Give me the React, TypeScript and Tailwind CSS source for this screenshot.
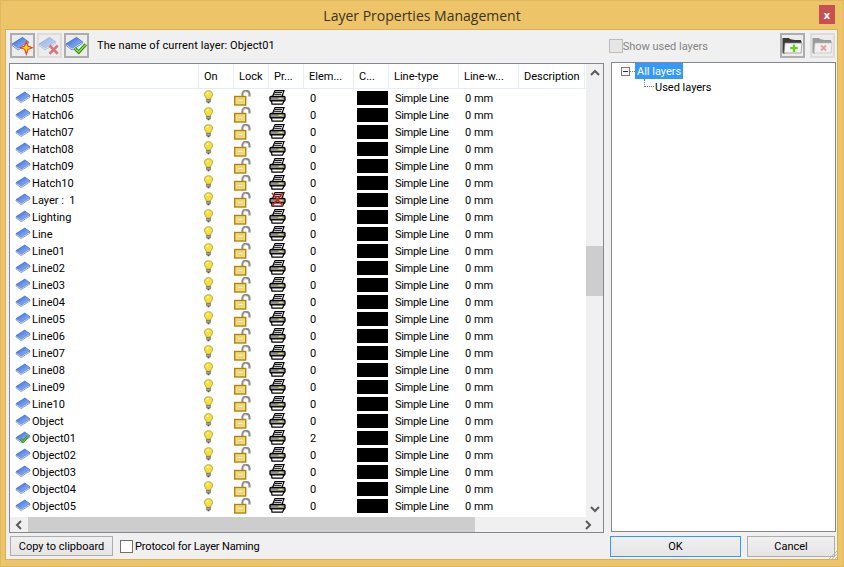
import React from 'react'

const names = [
  'Hatch05', 'Hatch06', 'Hatch07', 'Hatch08', 'Hatch09', 'Hatch10', 'Layer： 1', 'Lighting', 'Line',
  'Line01', 'Line02', 'Line03', 'Line04', 'Line05', 'Line06', 'Line07', 'Line08', 'Line09', 'Line10',
  'Object', 'Object01', 'Object02', 'Object03', 'Object04', 'Object05',
]

const columns = [
  { label: 'Name', width: 'w-[186px]' },
  { label: 'On', width: 'w-[35px]' },
  { label: 'Lock', width: 'w-[35px]' },
  { label: 'Pr...', width: 'w-[35px]' },
  { label: 'Elem...', width: 'w-[50px]' },
  { label: 'C...', width: 'w-[35px]' },
  { label: 'Line-type', width: 'w-[70px]' },
  { label: 'Line-w...', width: 'w-[60px]' },
  { label: 'Description', width: 'w-[66px]' },
]

function LayerShape({ id, faded }: { id: string; faded?: boolean }) {
  return (
    <g opacity={faded ? 0.45 : 1}>
      <defs>
        <linearGradient id={id} x1="0" y1="0" x2="1" y2="1">
          <stop offset="0" stopColor="#2a62d8" />
          <stop offset="1" stopColor="#a8c8fa" />
        </linearGradient>
      </defs>
      <path d="M1 7.5 L10.5 1.5 L16 5.5 L16 6.5 L6.5 12.5 L1 8.5 Z" fill="#e8eefa" stroke="#4a74c4" strokeWidth="0.7" />
      <path d="M1 7 L10.5 1 L16 5 L6.5 11 Z" fill={`url(#${id})`} stroke="#3a66c0" strokeWidth="0.5" />
    </g>
  )
}

function LayerIcon({ id, current }: { id: string; current?: boolean }) {
  return (
    <svg width="16" height="13" viewBox="0 0 17 14" className="mr-[1px] shrink-0">
      <LayerShape id={id} />
      {current && <path d="M5.5 8 L8.5 11.5 L14 5.5" fill="none" stroke="#2f8a14" strokeWidth="2.6" />}
      {current && <path d="M5.5 8 L8.5 11.5 L14 5.5" fill="none" stroke="#8fe04a" strokeWidth="1" />}
    </svg>
  )
}

function Bulb() {
  return (
    <svg width="9" height="14" viewBox="0 0 10 15" className="mt-[-1px]">
      <path d="M5 .5 C2.2 .5 .5 2.4 .5 4.6 C.5 6.8 2.6 8 3 10 L7 10 C7.4 8 9.5 6.8 9.5 4.6 C9.5 2.4 7.8 .5 5 .5 Z" fill="#f4e23c" stroke="#a89828" strokeWidth=".9" />
      <path d="M3.2 2.4 L5 1.8 L5 4 L3 4.6 Z" fill="#fdfbc4" />
      <rect x="3" y="10" width="4" height="3" fill="#a0a098" stroke="#66665f" strokeWidth=".7" />
      <rect x="4" y="13" width="2" height="1.5" fill="#55554f" />
    </svg>
  )
}

function Lock() {
  return (
    <svg width="17" height="16" viewBox="0 0 17 16">
      <path d="M8.5 7 L8.5 4 C8.5 1.6 10.2 .8 12 .8 C14 .8 15.5 2 15.5 4 L15.5 6.5" fill="none" stroke="#8e8e8e" strokeWidth="2.2" />
      <path d="M9.5 6 L9.5 4 C9.5 2.4 10.6 1.6 12 1.6" fill="none" stroke="#d0d0d0" strokeWidth=".8" />
      <rect x=".7" y="6.5" width="11" height="8.5" fill="#f2dc80" stroke="#b08410" strokeWidth="1.4" />
      <rect x="3" y="8.5" width="6.5" height="4.5" fill="#ecd672" />
      <rect x="4" y="10" width="4.5" height="1" fill="#fbf3c4" />
    </svg>
  )
}

function Printer({ off }: { off?: boolean }) {
  return (
    <svg width="17" height="15" viewBox="0 0 17 15">
      <path d="M6 .6 H15 L13 6.5 H3.6 Z" fill="#fff" stroke="#000" strokeWidth="1.2" />
      <path d="M6 2.4 H13 M5.2 4.3 H12.4" stroke="#000" strokeWidth="1" />
      <rect x="1" y="6.5" width="15" height="4.5" rx="1" fill="#8e8e8e" stroke="#000" strokeWidth="1.3" />
      <rect x="9.5" y="7.8" width="4" height="1.2" fill="#ece04a" />
      <path d="M2.5 11 H15 L13.5 14.2 H3 Z" fill="#fff" stroke="#000" strokeWidth="1.2" />
      {off && <path d="M3 1 L14 14 M14 1 L3 14" stroke="#e01818" strokeWidth="1.6" />}
    </svg>
  )
}

function ToolButton({ children, disabled }: { children: React.ReactNode; disabled?: boolean }) {
  return (
    <button className={`flex h-[25px] w-[25px] items-center justify-center border-2 bg-[#ececec] ${disabled ? 'border-[#dcdcdc]' : 'border-[#adadad]'}`}>
      {children}
    </button>
  )
}

function FolderIcon({ disabled }: { disabled?: boolean }) {
  return (
    <svg width="21" height="19" viewBox="0 0 21 19" opacity={disabled ? 0.45 : 1}>
      <path d="M1 2 H7 L9 4 H19 V7 H1 Z" fill="#3a3a3a" />
      <path d="M1 2 V17 H3 V7 H19 V5" fill="#3a3a3a" stroke="#3a3a3a" />
      <path d="M3 7 H20 L19 17 H2 Z" fill="#f6f6f6" stroke="#8a8a8a" strokeWidth=".7" />
      {disabled ? (
        <path d="M9 9.5 L14 14.5 M14 9.5 L9 14.5" stroke="#d8484a" strokeWidth="2" />
      ) : (
        <path d="M12 8.5 V16 M8.2 12.2 H15.8" stroke="#63d615" strokeWidth="2.2" />
      )}
    </svg>
  )
}

function Chevron({ dir }: { dir: 'up' | 'down' | 'left' | 'right' }) {
  const paths = {
    up: 'M1 6 L5 2 L9 6',
    down: 'M1 2 L5 6 L9 2',
    left: 'M6 1 L2 5 L6 9',
    right: 'M2 1 L6 5 L2 9',
  }
  const horizontal = dir === 'up' || dir === 'down'
  return (
    <svg width={horizontal ? 10 : 8} height={horizontal ? 8 : 10} viewBox={horizontal ? '0 0 10 8' : '0 0 8 10'}>
      <path d={paths[dir]} fill="none" stroke="#5a5a5a" strokeWidth="2" />
    </svg>
  )
}

function Row({ name, index }: { name: string; index: number }) {
  return (
    <div className="flex h-[17px] items-center text-[11px] text-[#000]">
      <div className="flex w-[186px] items-center pl-[2px]">
        <LayerIcon id={`layer-${index}`} current={name === 'Object01'} />
        <span className="whitespace-pre pt-[3px]">{name === 'Layer： 1' ? 'Layer :  1' : name}</span>
      </div>
      <div className="flex w-[35px] pl-[5px]"><Bulb /></div>
      <div className="flex w-[35px]"><Lock /></div>
      <div className="flex w-[35px]"><Printer off={name === 'Layer： 1'} /></div>
      <div className="w-[50px] pl-[6px] pt-[3px]">{name === 'Object01' ? '2' : '0'}</div>
      <div className="w-[35px] pl-[3px]"><div className="h-[14px] w-[31px] bg-black" /></div>
      <div className="w-[70px] pl-[6px] pt-[3px] tracking-[-0.3px]">Simple Line</div>
      <div className="w-[60px] pl-[6px] pt-[3px]">0 mm</div>
    </div>
  )
}

export default function App() {
  return (
    <div className="flex h-[567px] w-[844px] flex-col border border-[#e0b860] bg-[#eec468] font-['Roboto','Noto_Sans',sans-serif] text-[11px] text-black">
      <div className="relative flex h-[28px] shrink-0 items-center justify-center font-['Open_Sans',sans-serif] text-[14px] text-[#3c3320]">
        Layer Properties Management
        <button className="absolute right-[8px] top-[4px] flex h-[19px] w-[16px] items-center justify-center bg-[#c75050] text-[11px] font-bold leading-none text-white">x</button>
      </div>

      <div className="relative mb-[6px] ml-[4px] mr-[5px] flex min-h-0 flex-1 flex-col border border-[#d8b05c] bg-[#f0f0f0]">
        <div className="flex h-[33px] shrink-0 items-start pl-[4px] pr-[2px] pt-[3px]">
          <div className="flex gap-[2px]">
            <ToolButton>
              <svg width="23" height="21" viewBox="0 0 21 19" className="shrink-0">
                <g transform="translate(0 1)"><LayerShape id="tool-add" /></g>
                <path d="M14 6 L15.5 10 L19.5 11.5 L15.5 13 L14 17.5 L12.5 13 L8.5 11.5 L12.5 10 Z" fill="#ffdc1e" stroke="#f03c10" />
              </svg>
            </ToolButton>
            <ToolButton disabled>
              <svg width="23" height="21" viewBox="0 0 21 19" className="shrink-0">
                <g transform="translate(0 1)"><LayerShape id="tool-delete" faded /></g>
                <path d="M10.5 9.5 L18 17 M18 9.5 L10.5 17" stroke="#d87878" strokeWidth="2.4" />
              </svg>
            </ToolButton>
            <ToolButton>
              <svg width="23" height="21" viewBox="0 0 21 19" className="shrink-0">
                <g transform="translate(0 1)"><LayerShape id="tool-current" /></g>
                <path d="M9 12 L12.5 15.5 L19 8.5" fill="none" stroke="#2f8a14" strokeWidth="3" />
                <path d="M9 12 L12.5 15.5 L19 8.5" fill="none" stroke="#8fe04a" strokeWidth="1.2" />
              </svg>
            </ToolButton>
          </div>
          <span className="ml-[8px] pt-[1px] leading-[24px] tracking-[0.1px]">The name of current layer: Object01</span>
          <div className="ml-auto flex items-center">
            <span className="h-[14px] w-[14px] border border-[#bcbcbc] bg-[#e6e6e6]" />
            <span className="pt-[3px] text-[#838383]">Show used layers</span>
            <div className="ml-[72px] flex gap-[5px]">
              <ToolButton><FolderIcon /></ToolButton>
              <ToolButton disabled><FolderIcon disabled /></ToolButton>
            </div>
          </div>
        </div>

        <div className="flex min-h-0 flex-1 pl-[3px] pr-[2px]">
          <div className="flex h-[470px] w-[595px] shrink-0 flex-col border border-[#828790] bg-white">
            <div className="flex min-h-0 flex-1">
              <div className="w-[576px] shrink-0 overflow-hidden pl-[3px]">
                <div className="flex h-[25px] items-center border-b border-[#e3ecf8]">
                  {columns.map((col) => (
                    <div key={col.label} className={`flex h-full items-center border-r border-[#e6eef8] pl-[5px] pt-[3px] first:pl-[3px] ${col.width}`}>
                      <span className="whitespace-nowrap">{col.label}</span>
                    </div>
                  ))}
                </div>
                {names.map((name, i) => (
                  <Row key={name} name={name} index={i} />
                ))}
              </div>
              <div className="flex w-[17px] flex-col items-center bg-[#f0f0f0]">
                <div className="flex h-[17px] items-center"><Chevron dir="up" /></div>
                <div className="mt-[165px] h-[50px] w-full bg-[#cdcdcd]" />
                <div className="mt-auto flex h-[17px] items-center"><Chevron dir="down" /></div>
              </div>
            </div>
            <div className="flex h-[15px] shrink-0 items-center bg-[#f0f0f0]">
              <div className="flex w-[18px] justify-center"><Chevron dir="left" /></div>
              <div className="h-full w-[447px] bg-[#cdcdcd]" />
              <div className="ml-auto flex w-[31px] justify-center"><Chevron dir="right" /></div>
            </div>
          </div>

          <div className="ml-[7px] mt-[-1px] h-[470px] w-[225px] shrink-0 border border-[#828790] bg-white">
            <div className="flex h-[16px] items-center pl-[9px]">
              <span className="flex h-[9px] w-[9px] items-center justify-center border border-[#7a7a7a] bg-[#f4f4f4]">
                <span className="h-px w-[5px] bg-[#333]" />
              </span>
              <span className="w-[5px] border-t border-dotted border-[#777]" />
              <span className="bg-[#3399ff] px-[2px] pt-[1px] leading-[15px] text-white">All layers</span>
            </div>
            <div className="flex h-[16px] items-center pl-[32px]">
              <span className="mb-[8px] h-[8px] w-[10px] border-b border-l border-dotted border-[#777]" />
              <span className="ml-[1px] pt-[2px]">Used layers</span>
            </div>
          </div>
        </div>

        <div className="flex h-[26px] shrink-0 items-center pl-[4px] pr-[2px]">
          <button className="h-[20px] w-[103px] border border-[#adadad] bg-gradient-to-b from-[#f0f0f0] to-[#e5e5e5] pt-[2px]">Copy to clipboard</button>
          <span className="ml-[7px] h-[13px] w-[13px] border border-[#707070] bg-white" />
          <span className="ml-[2px] pt-[3px] tracking-[-0.15px]">Protocol for Layer Naming</span>
          <div className="ml-auto flex gap-[6px]">
            <button className="h-[21px] w-[131px] border border-[#3399ff] bg-gradient-to-b from-[#f0f0f0] to-[#e5e5e5] pt-[2px]">OK</button>
            <button className="h-[21px] w-[88px] border border-[#adadad] bg-gradient-to-b from-[#f0f0f0] to-[#e5e5e5] pt-[2px]">Cancel</button>
          </div>
        </div>

        <svg width="8" height="8" viewBox="0 0 8 8" className="absolute bottom-0 right-0">
          <path d="M0 8 L8 0 M3 8 L8 3 M6 8 L8 6" stroke="#b4b4b4" strokeWidth="1" />
        </svg>
      </div>
    </div>
  )
}
